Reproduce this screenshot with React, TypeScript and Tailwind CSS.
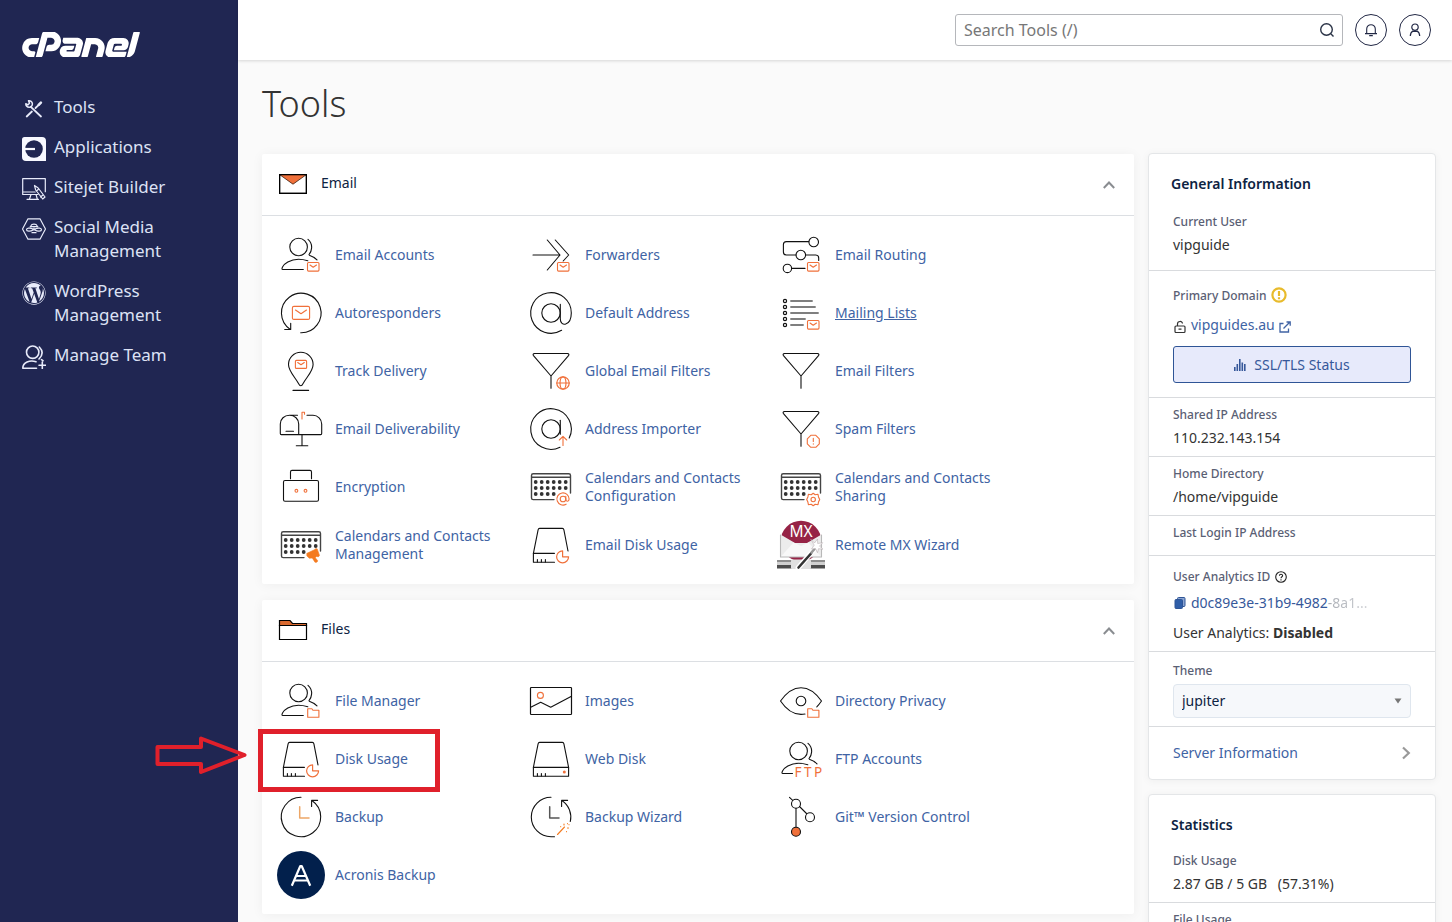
import React from "react";
import { SiCpanel } from "react-icons/si";
import { FaWordpress } from "react-icons/fa";

const ORANGE = "#f0703a";

function Art({ children }: { children: React.ReactNode }) {
  return (
    <svg
      viewBox="0 0 48 48"
      className="size-12 shrink-0 overflow-visible"
      fill="none"
      stroke="#111"
      strokeWidth="1.1"
      strokeLinecap="round"
      strokeLinejoin="round"
      aria-hidden="true"
    >
      {children}
    </svg>
  );
}

/* Small corner badges shared by several icons */
const MailBadge = () => (
  <g stroke={ORANGE}>
    <rect x="30.5" y="31.5" width="11.5" height="8.6" rx="1" />
    <path d="M33 34l3.2 2.2L39.5 34" />
  </g>
);
const FolderBadge = () => (
  <path stroke={ORANGE} d="M30.7 40.2v-8.4h4.2l1 1.4h6v7z" />
);
const PieBadge = () => (
  <path stroke={ORANGE} strokeWidth="1.2" d="M35.6 29.8a6 6 0 1 0 6 6h-6z" />
);

const UserShape = ({ short }: { short?: boolean }) => (
  <>
    <circle cx="21.6" cy="16" r="8.8" />
    <path d="M31 8.3c2.8 2.4 3.9 5.4 3.6 8.8-.2 3-1.3 5-2.6 6.5M32.3 24.3c3 1 5.7 2.5 7.7 4.6" />
    <path d={short ? "M15.5 38.5H5.8c-2.2 0 .2-5 5-7.6 5.7-3 13.5-3.1 20-1.1" : "M26.3 38.5H5.8c-2.2 0 .2-5 5-7.6 5.7-3 13.5-3.1 20-1.1"} />
  </>
);
const AtShape = ({ cut }: { cut?: boolean }) => (
  <>
    <circle cx="24" cy="24" r="9.2" />
    {cut ? (
      <>
        <path d="M42.2 33A20.3 20.3 0 1 0 33 42.2" />
        <path d="M33.3 15.3v14" />
      </>
    ) : (
      <path d="M33.3 15.3V30c0 8 10.9 7.3 11-6A20.3 20.3 0 1 0 34.6 41.3" />
    )}
  </>
);
const Funnel = () => (
  <path d="M7.5 6.5h33c1.4 0 1.8 1.2 1 2.2L24 29 6.5 8.7c-.8-1-.4-2.2 1-2.2zM24 29v12.3" />
);
const DOTS = [19, 25, 31];
const CalendarShape = () => (
  <>
    <path stroke="#444" strokeWidth="1.4" d="M27 36.6H6.2c-1 0-1.7-.6-1.7-1.6V12.4c0-1 .7-1.7 1.7-1.7h35.6c1 0 1.7.7 1.7 1.7V30M4.5 14.3h39" />
    <g fill="#333" stroke="none">
      {DOTS.map((y) =>
        [8.7, 14.7, 20.7, 26.7, 32.7, 38.7]
          .filter((x) => y < 31 || x < 28)
          .map((x) => <circle key={`${x}-${y}`} cx={x} cy={y} r="1.9" />)
      )}
    </g>
  </>
);
const DiskShape = ({ cut }: { cut?: boolean }) => (
  <>
    <path d={cut ? "M27.5 41.3H6.4v-9l4.7-23.5c.2-.9.7-1.4 1.5-1.4h22.8c.8 0 1.3.5 1.5 1.4L41 30" : "M6.4 41.3v-9l4.7-23.5c.2-.9.7-1.4 1.5-1.4h22.8c.8 0 1.3.5 1.5 1.4l4.7 23.5v9z"} />
    <path d={cut ? "M6.4 32.4h21M10.4 38.5v2.5M14.4 38.5v2.5M18.4 38.5v2.5" : "M6.4 32.4h35.2M10.4 38.5v2.5M14.4 38.5v2.5M18.4 38.5v2.5"} />
  </>
);

const icons: Record<string, React.ReactNode> = {
  "Email Accounts": <Art><UserShape /><MailBadge /></Art>,
  Forwarders: (
    <Art>
      <path d="M6 24h27M20.3 9L33 24 20.3 39M28.3 9l13.4 15-5.5 6" />
      <MailBadge />
    </Art>
  ),
  "Email Routing": (
    <Art>
      <circle cx="36.7" cy="11" r="4.8" />
      <circle cx="23.8" cy="24" r="4.8" />
      <circle cx="10.4" cy="37.4" r="4.2" />
      <path d="M31.7 10.6H9.4a3 3 0 0 0-3 3V21a3 3 0 0 0 3 3H19M28.7 24h10a3 3 0 0 1 3 3v2.5M14.7 37.4H28" />
      <MailBadge />
    </Art>
  ),
  Autoresponders: (
    <Art>
      <path d="M23.7 43.8A19.8 19.8 0 1 0 13.3 40.5M7.7 40.5h6v-6.3" />
      <g stroke={ORANGE}>
        <rect x="15.4" y="17.4" width="17.2" height="13" rx="1.5" />
        <path d="M18.5 21l5.5 3.8 5.5-3.8" />
      </g>
    </Art>
  ),
  "Default Address": <Art><AtShape /></Art>,
  "Mailing Lists": (
    <Art>
      {[12, 18, 24, 30, 36].map((y) => <circle key={y} cx="8" cy={y} r="1.6" strokeWidth="1.2" />)}
      <path stroke="#555" strokeWidth="1.5" strokeLinecap="butt" d="M13.3 12h22.4M13.3 18h25.4M13.3 24h28.4M13.3 30h15.4M13.3 36h13.4" />
      <MailBadge />
    </Art>
  ),
  "Track Delivery": (
    <Art>
      <path d="M23.8 38.7c-1 0-1.7-1-2.3-2.2C17.5 29.5 11.5 24 11.5 17.5a12.3 12.3 0 0 1 24.6 0c0 6.5-6 12-10 19-.6 1.2-1.3 2.2-2.3 2.2zM16 43.4h15.6" />
      <g stroke={ORANGE}>
        <rect x="18.4" y="13.4" width="11.2" height="8" rx="1" />
        <path d="M20.7 15.5l3.3 2.3 3.3-2.3" />
      </g>
    </Art>
  ),
  "Global Email Filters": (
    <Art>
      <Funnel />
      <g stroke={ORANGE} strokeWidth="1.2">
        <circle cx="36" cy="36" r="6.2" />
        <ellipse cx="36" cy="36" rx="3" ry="6.2" />
        <path d="M29.8 36h12.4" />
      </g>
    </Art>
  ),
  "Email Filters": <Art><Funnel /></Art>,
  "Email Deliverability": (
    <Art>
      <path d="M21.7 29.6H4.3c-.7 0-1-.4-1-1V19c0-5 4-8.7 9.2-8.7s9.2 3.7 9.2 8.7v10.6h22c.7 0 1-.4 1-1V19c0-5-4-8.7-8.7-8.7h-6M12.5 10.3h8M9 26.3h7.5M25 29.6v11.2M19.3 40.8h11.5" />
      <path stroke={ORANGE} d="M25 14V7.3h2.5v2" />
    </Art>
  ),
  "Address Importer": (
    <Art>
      <AtShape cut />
      <path stroke={ORANGE} d="M36 40.5v-9M32.3 35l3.7-3.6 3.7 3.6" />
    </Art>
  ),
  "Spam Filters": (
    <Art>
      <Funnel />
      <path stroke={ORANGE} d="M33.8 30.3h5l3.5 3.5v5l-3.5 3.5h-5l-3.5-3.5v-5zM36.3 33.3v3.2M36.3 38.7v.4" />
    </Art>
  ),
  Encryption: (
    <Art>
      <rect x="6.5" y="17.5" width="35" height="20.8" rx="1.5" />
      <path d="M13.5 15.7V8.9c0-1 .5-1.5 1.5-1.5h18c1 0 1.5.5 1.5 1.5v6.8" />
      <circle cx="19.4" cy="27.8" r="1.4" stroke={ORANGE} />
      <circle cx="28.5" cy="27.8" r="1.4" stroke={ORANGE} />
    </Art>
  ),
  "Calendars and Contacts Configuration": (
    <Art>
      <CalendarShape />
      <g stroke={ORANGE}>
        <circle cx="36" cy="36" r="2.8" />
        <path d="M38.8 33.2V36c0 3.2 3.3 2.8 3.3 0a6.1 6.1 0 1 0-3 5.2" />
      </g>
    </Art>
  ),
  "Calendars and Contacts Sharing": (
    <Art>
      <CalendarShape />
      <g stroke={ORANGE}>
        <circle cx="36.2" cy="36.5" r="2.2" />
        <path d="M36.2 30.2l2 1.5 2.8-.4.5 2.6 1.2 2.6-1.2 2.6-.5 2.6-2.8-.4-2 1.5-2-1.5-2.8.4-.5-2.6-1.2-2.6 1.2-2.6.5-2.6 2.8.4z" />
      </g>
    </Art>
  ),
  "Calendars and Contacts Management": (
    <Art>
      <CalendarShape />
      <path fill="#f47b20" stroke="#f47b20" strokeWidth=".6" d="M30 32.3l8-3.8.7-.9 1.5.3 2.3 6.500-1 1.300-2.200-.2-1 1.200 2.500 3.200-1 1.300-1.800.1-2.700-4.300-3 .2-2.300-2.200z" />
    </Art>
  ),
  "Email Disk Usage": <Art><DiskShape cut /><PieBadge /></Art>,
  "Remote MX Wizard": (
    <Art>
      <g stroke="none">
        <circle cx="24" cy="20" r="20.3" fill="#962346" />
        <path d="M3.5 13.5L18 22h12l14.5-8.5V36h-41z" fill="#ececec" />
        <path d="M3.5 36l13-14.500L24 25l7.500-3.500L44.500 36z" fill="#f8f8f8" />
        <rect y="39" width="48" height="2" fill="#8d8d8d" />
        <rect y="41" width="48" height="3" fill="#d0d0d0" />
        <rect y="44" width="48" height="3.5" fill="#4d4d4d" />
        <rect x="14" y="38.5" width="20" height="9.5" rx="1" fill="#e0e0e0" />
      </g>
      <path d="M3.5 14v22h41V14" stroke="#b8b8b8" />
      <text x="24" y="16" textAnchor="middle" fontSize="15.5" fill="#fff" stroke="none" fontFamily="Noto Sans, sans-serif">MX</text>
      <path d="M21 47l16.5-19" stroke="#fff" strokeWidth="5" />
      <path d="M21.5 46.5l12.5-14" stroke="#333" strokeWidth="2.6" />
      <path d="M34.5 31.5l3-3.5" stroke="#9a9a9a" strokeWidth="2.6" />
      <path fill="#fff" stroke="#b9aeb1" strokeWidth=".6" d="M34 18.5l3.5 3.5 3-4 .2 4.5 5-.8-3.200 3.500 3.500 3-4.500-.5-1 4-2-4.200-4 .5 2.500-3.500z" />
    </Art>
  ),
  "File Manager": <Art><UserShape /><FolderBadge /></Art>,
  Images: (
    <Art>
      <rect x="3.5" y="10.5" width="41" height="27" rx=".8" strokeWidth="1.2" />
      <path d="M3.7 30.2l10-5 10 5 20.8-11" />
      <circle cx="13.4" cy="18.4" r="3" stroke={ORANGE} />
    </Art>
  ),
  "Directory Privacy": (
    <Art>
      <path d="M28 37c-9.5 1.8-18-3.3-24.5-13 6-8.5 12.5-13.3 20.5-13.3S38.5 15.5 44.5 24c-1.5 2.2-3 4.2-4.7 5.8" />
      <circle cx="24" cy="24" r="4.8" />
      <FolderBadge />
    </Art>
  ),
  "Disk Usage": <Art><DiskShape cut /><PieBadge /></Art>,
  "Web Disk": (
    <Art>
      <DiskShape />
      <circle cx="37.3" cy="36.9" r="1.5" fill={ORANGE} stroke="none" />
    </Art>
  ),
  "FTP Accounts": (
    <Art>
      <UserShape short />
      <text x="17.5" y="41.7" fontSize="13.5" fill={ORANGE} stroke="none" fontFamily="Noto Sans, sans-serif">
        <tspan>F</tspan>
        <tspan x="27">T</tspan>
        <tspan x="37">P</tspan>
      </text>
    </Art>
  ),
  Backup: (
    <Art>
      <path d="M24 4.3A19.7 19.7 0 1 0 35.2 7.8M34.6 13.5V7.4h6" />
      <path stroke="#eda667" strokeWidth="1.5" d="M22.7 13.7V25H32" />
    </Art>
  ),
  "Backup Wizard": (
    <Art>
      <path d="M43.3 28.5A19.7 19.7 0 0 0 35.2 7.8M24 4.3a19.7 19.7 0 0 0 0 39.4h3.5M34.6 13.5V7.4h6" />
      <path stroke="#555" strokeWidth="1.5" d="M22.7 13.7V25H32" />
      <path stroke="#f47b20" d="M30.5 41.5l7-7.5M37 32v-1M33.7 33.5v.2M40.5 30.5v.2M40.5 35h1M42 31.5v.2M39.5 38.5v.2" />
    </Art>
  ),
  "Git™ Version Control": (
    <Art>
      <path d="M12.5 4.3l3.2 3M22.5 13.5l7 7" />
      <path stroke="#444" strokeWidth="1.4" d="M19 15.5V34" />
      <circle cx="19" cy="10.8" r="4.5" />
      <circle cx="33" cy="24.3" r="4.5" />
      <circle cx="19" cy="38.7" r="4.5" fill={ORANGE} />
    </Art>
  ),
  "Acronis Backup": (
    <Art>
      <circle cx="24" cy="24" r="24" fill="#02204c" stroke="none" />
      <path stroke="#fff" strokeWidth="2.2" strokeLinecap="butt" d="M14.8 34.7L23.3 15h1.4l8.5 19.7" />
      <path stroke="#fff" strokeWidth="1.8" strokeLinecap="butt" d="M19.5 25h9M17.5 29.5h13" />
    </Art>
  ),
};

function Callout() {
  return (
    <>
      <span className="pointer-events-none absolute -top-px -bottom-1 -left-[19px] w-[182px] border-[5px] border-[#e0202b]" />
      <svg viewBox="0 0 92 40" className="pointer-events-none absolute top-1.5 -left-[122px] z-10 h-10 w-[92px]" fill="none" stroke="#e0202b" strokeWidth="4" strokeLinejoin="round" aria-hidden="true">
        <path d="M2.5 11H46V2.500l43.500 16.500L46 36v-8H2.500z" />
      </svg>
    </>
  );
}

type Tool = { name: string; underlined?: boolean; marked?: boolean };

function Panel({ title, icon, tools }: { title: string; icon: React.ReactNode; tools: Tool[] }) {
  return (
    <section className="rounded-xs bg-white shadow-[0_1px_12px_rgba(0,0,0,0.05)]">
      <header className="flex h-[62px] items-center border-b border-[#dcdfe3] px-4">
        <div className="flex flex-1 items-center gap-[13px] pb-[3px]">
          <span className="mt-0.5">{icon}</span>
          <h2 className="text-sm text-[#0d2342]">{title}</h2>
        </div>
        <button type="button" aria-label={`Collapse ${title}`} className="flex size-[18px] items-center justify-center">
          <svg viewBox="0 0 12 8" className="h-2 w-3" fill="none" stroke="#8a8d91" strokeWidth="2" aria-hidden="true">
            <path d="M.8 7L6 1.500 11.200 7" />
          </svg>
        </button>
      </header>
      <ul className="grid grid-cols-[repeat(auto-fill,250px)] py-2.5 pl-[15px]">
        {tools.map((t) => (
          <li key={t.name} className="relative h-[58px]">
            <a href="#" className="flex h-full items-center gap-2.5 pr-6 text-sm leading-[18px] text-[#4063a4]">
              {icons[t.name]}
              <span className={t.underlined ? "underline" : ""}>{t.name}</span>
            </a>
            {t.marked && <Callout />}
          </li>
        ))}
      </ul>
    </section>
  );
}

const emailTools: Tool[] = [
  { name: "Email Accounts" },
  { name: "Forwarders" },
  { name: "Email Routing" },
  { name: "Autoresponders" },
  { name: "Default Address" },
  { name: "Mailing Lists", underlined: true },
  { name: "Track Delivery" },
  { name: "Global Email Filters" },
  { name: "Email Filters" },
  { name: "Email Deliverability" },
  { name: "Address Importer" },
  { name: "Spam Filters" },
  { name: "Encryption" },
  { name: "Calendars and Contacts Configuration" },
  { name: "Calendars and Contacts Sharing" },
  { name: "Calendars and Contacts Management" },
  { name: "Email Disk Usage" },
  { name: "Remote MX Wizard" },
];

const fileTools: Tool[] = [
  { name: "File Manager" },
  { name: "Images" },
  { name: "Directory Privacy" },
  { name: "Disk Usage", marked: true },
  { name: "Web Disk" },
  { name: "FTP Accounts" },
  { name: "Backup" },
  { name: "Backup Wizard" },
  { name: "Git™ Version Control" },
  { name: "Acronis Backup" },
];

function NavArt({ children }: { children: React.ReactNode }) {
  return (
    <svg viewBox="0 0 24 24" className="size-6" fill="none" stroke="#e8ebfa" strokeWidth="1.2" strokeLinecap="round" strokeLinejoin="round" aria-hidden="true">
      {children}
    </svg>
  );
}

const navItems: { label: string; icon: React.ReactNode }[] = [
  {
    label: "Tools",
    icon: (
      <NavArt>
        <path strokeWidth="1.8" d="M8.8 9.8l10.2 9.7M4.7 19.5l5.2-5M13.5 11l3.3-3.2" />
        <path strokeWidth="2.6" d="M16.7 7.8l2.2-2.2" />
        <path strokeWidth="1.5" d="M6.5 3.7a3.3 3.3 0 1 1-2.7 3l2 1.2 1.7-1.6z" />
      </NavArt>
    ),
  },
  {
    label: "Applications",
    icon: (
      <NavArt>
        <path fill="#f7f8ff" stroke="none" d="M2.5 0H20a4 4 0 0 1 4 4v20H4a4 4 0 0 1-4-4V2.5A2.5 2.5 0 0 1 2.5 0z" />
        <circle cx="12" cy="12" r="8.8" fill="#202652" stroke="none" />
        <path stroke="#f7f8ff" strokeWidth="2.2" strokeLinecap="butt" d="M2 12h11" />
      </NavArt>
    ),
  },
  {
    label: "Sitejet Builder",
    icon: (
      <NavArt>
        <path d="M16 17.5H.7V1.7h22.6v13M.7 15h12.5M9 17.5L7.5 22M14 17.5l1.3 4.5M5 22.3h11.5" />
        <path d="M12.5 8.5l1.2 4.5 7 9 2.3-2-6.8-9zM14.5 14l2.2-2M18.5 20l2.5-2" />
      </NavArt>
    ),
  },
  {
    label: "Social Media Management",
    icon: (
      <NavArt>
        <path d="M6 1.8h12L23.5 12 18 22.2H6L.5 12z" />
        <path d="M9 8.7c.6-2.2 5.4-2.2 6 0M8.2 9.7h7.6M11 12c-3-1.5-6.5-1-6.5.7s4 2 6.5.3M13 12c3-1.5 6.5-1 6.5.7s-4 2-6.5.3M10 15.7h4M12 11v2" />
      </NavArt>
    ),
  },
  { label: "WordPress Management", icon: <FaWordpress className="size-6 text-[#e8ebfa]" aria-hidden="true" /> },
  {
    label: "Manage Team",
    icon: (
      <NavArt>
        <g strokeWidth="1.6">
          <circle cx="10.7" cy="7.2" r="6.2" />
          <path d="M17.3 2c3.7 3.7 3.6 8-.3 12M19.5 14.7l1.500 1M14.500 23.200H.8c0-6 7-8.300 13.200-6.500M20.300 17v6.500M17 20.300h6.500" />
        </g>
      </NavArt>
    ),
  },
];

function Row({ label, children, className = "py-2" }: { label: React.ReactNode; children?: React.ReactNode; className?: string }) {
  return (
    <div className={`px-6 ${className}`}>
      <div className="flex items-center gap-1 text-xs leading-[18px] font-medium text-[#5a6074]">{label}</div>
      {children}
    </div>
  );
}

const cardClass = "rounded-sm border border-[#e4e6e8] bg-white shadow-[0_1px_8px_rgba(0,0,0,0.05)]";
const valueClass = "mt-1 text-sm leading-5 text-[#333]";

export default function App() {
  return (
    <div className="h-screen overflow-x-hidden overflow-y-auto bg-[#fafafa] font-['Noto_Sans',sans-serif] [scrollbar-width:none]">
      <div className="flex min-h-full">
        <nav className="w-[238px] shrink-0 bg-[#202652] px-[22px] pt-8" aria-label="Main">
          <a href="#" aria-label="cPanel" className="block">
            <SiCpanel viewBox="0 9.450 24 5.100" className="h-[25px] w-[118px] text-white" />
          </a>
          <ul className="mt-[38px] flex flex-col gap-4">
            {navItems.map((n) => (
              <li key={n.label}>
                <a href="#" className="flex items-start gap-2 text-[17px] leading-6 text-[#dde2f5]">
                  <span className="mt-0.5 h-[22px] shrink-0">{n.icon}</span>
                  <span>{n.label}</span>
                </a>
              </li>
            ))}
          </ul>
        </nav>

        <div className="min-w-0 flex-1">
          <header className="flex h-[60px] items-center justify-end gap-3 bg-white pr-[21px] shadow-[0_1px_3px_rgba(0,0,0,0.15)]">
            <form role="search" className="flex h-8 w-[388px] items-center rounded-[3px] border border-[#b5b7bb] pr-[7px] pl-2" onSubmit={(e) => e.preventDefault()}>
              <input type="text" aria-label="Search Tools" placeholder="Search Tools (/)" className="min-w-0 flex-1 text-base leading-6 outline-none placeholder:text-[#777]" />
              <button type="submit" aria-label="Search">
                <svg viewBox="0 0 16 16" className="size-4" fill="none" stroke="#2b3447" strokeWidth="1.4" aria-hidden="true">
                  <circle cx="7.5" cy="7.5" r="5.8" />
                  <path d="M11.800 11.800l2.700 2.700" />
                </svg>
              </button>
            </form>
            <button type="button" aria-label="Notifications" className="flex size-8 items-center justify-center rounded-full border border-[#222845]">
              <svg viewBox="0 0 14 14" className="size-3.5" fill="none" stroke="#222845" strokeWidth="1.1" aria-hidden="true">
                <path d="M1 10.600h12M2.700 10.600V6a4.300 4.300 0 0 1 8.600 0v4.600M5.200 12.600h3.600" />
              </svg>
            </button>
            <button type="button" aria-label="Account" className="flex size-8 items-center justify-center rounded-full border border-[#222845]">
              <svg viewBox="0 0 14 14" className="size-3.5" fill="none" stroke="#222845" strokeWidth="1.2" aria-hidden="true">
                <circle cx="7" cy="4.2" r="3.2" />
                <path d="M2.300 13c0-2.800 1.300-4.300 3-5.200M11.700 13c0-2.800-1.300-4.300-3-5.200M5 8.500h4" />
              </svg>
            </button>
          </header>

          <main className="pr-4 pb-4 pl-6">
            <h1 className="pt-5 text-4xl leading-[48px] font-light text-[#333]">Tools</h1>
            <div className="mt-[25px] flex items-start gap-3.5">
              <div className="flex min-w-0 flex-1 flex-col gap-4 pt-px">
                <Panel
                  title="Email"
                  tools={emailTools}
                  icon={
                    <svg viewBox="0 0 30 22" className="h-[22px] w-[30px]" fill="none" stroke="#000" strokeWidth="1.2" aria-hidden="true">
                      <path d="M1.600 1.600h26.800v18.800H1.600z" fill="#fff" />
                      <path d="M1.600 1.600h26.800L15 11.200z" fill={ORANGE} stroke="#3a1a0a" strokeWidth=".8" />
                      <path d="M1.600 1.600h26.800v18.800H1.600z" />
                    </svg>
                  }
                />
                <Panel
                  title="Files"
                  tools={fileTools}
                  icon={
                    <svg viewBox="0 0 30 22" className="h-[22px] w-[30px]" stroke="#000" strokeWidth="1.2" aria-hidden="true">
                      <path d="M1.500 6.500v-5H12l2.500 3h14v2z" fill="#d9692f" />
                      <path d="M1.500 6.500h27v14h-27z" fill="#fff" />
                    </svg>
                  }
                />
              </div>

              <aside className="flex w-[288px] shrink-0 flex-col gap-3.5">
                <section className={cardClass}>
                  <h3 className="px-[22px] pt-5 pb-4 text-sm leading-5 font-semibold text-[#0d2342]">General Information</h3>
                  <div className="divide-y divide-[#d9dbde]">
                    <Row label="Current User" className="pt-[3px] pb-[15px]">
                      <div className={valueClass}>vipguide</div>
                    </Row>
                    <Row
                      className="pt-4 pb-3.5"
                      label={
                        <>
                          Primary Domain
                          <svg viewBox="0 0 16 16" className="mb-0.5 size-4" fill="none" stroke="#e8bb2c" strokeWidth="2.2" aria-hidden="true">
                            <circle cx="8" cy="8" r="6.6" />
                            <path d="M8 4v5M8 10.300v1.900" />
                          </svg>
                        </>
                      }
                    >
                      <div className="mt-[9px] flex items-center gap-1 text-sm leading-[22px]">
                        <svg viewBox="0 0 14 14" className="mt-1 size-3.5" fill="none" stroke="#333" strokeWidth="1.2" aria-hidden="true">
                          <rect x="2" y="6" width="10" height="6.5" rx="1" />
                          <path d="M4.500 6V3.800C4.500 1 9.500.5 9.500 3.500M5.500 9.200h3" />
                        </svg>
                        <a href="#" className="flex items-center gap-1 text-[#4063a4]">
                          vipguides.au
                          <svg viewBox="0 0 12 12" className="mt-1 size-3" fill="none" stroke="currentColor" strokeWidth="1.3" aria-hidden="true">
                            <path d="M4.500 2.500H1v8.500h8.500V7.500M4.500 7.500L10.700 1.300M7.500 1h3.700v3.700" />
                          </svg>
                        </a>
                      </div>
                      <button type="button" className="mt-2.5 flex h-[37px] w-full items-center justify-center gap-2 rounded-[3px] border border-[#2f5596] bg-[#e7eafb] text-sm text-[#36589a]">
                        <svg viewBox="0 0 12 12" className="size-3" fill="currentColor" aria-hidden="true">
                          <path d="M0 8h1.600v4H0zM2.500 5h1.600v7H2.500zM5 0h1.600v12H5zM7.500 3.500h1.600V12H7.500zM10 5h1.600v7H10z" />
                        </svg>
                        SSL/TLS Status
                      </button>
                    </Row>
                    <Row label="Shared IP Address">
                      <div className={valueClass}>110.232.143.154</div>
                    </Row>
                    <Row label="Home Directory">
                      <div className={valueClass}>/home/vipguide</div>
                    </Row>
                    <Row label="Last Login IP Address" className="pt-2 pb-[13px]" />
                    <Row
                      className="pt-3 pb-[7px]"
                      label={
                        <>
                          User Analytics ID
                          <svg viewBox="0 0 12 12" className="ml-px size-3" fill="none" stroke="#222" strokeWidth="1.1" aria-hidden="true">
                            <circle cx="6" cy="6" r="5.3" />
                            <path d="M4.400 4.800c0-2 3.200-2 3.200-.1C7.600 5.800 6 5.700 6 7.200M6 8.300v1.200" />
                          </svg>
                        </>
                      }
                    >
                      <div className="mt-1.5 flex items-center gap-1 text-sm leading-[22px] text-[#36589a]">
                        <svg viewBox="0 0 14 14" className="size-3.5" aria-hidden="true">
                          <rect x="4.5" y="1.5" width="7.5" height="9" rx="1" fill="#8ca6d3" stroke="#2f5596" />
                          <rect x="2" y="3.5" width="7.5" height="9" rx="1" fill="#2f5ea8" stroke="#2f5596" />
                        </svg>
                        <span>
                          d0c89e3e-31b9-4982
                          <span className="bg-linear-to-r from-[#a9adb4] to-[#d0d2d6] bg-clip-text text-transparent">-8a1...</span>
                        </span>
                      </div>
                      <div className="mt-2 text-sm leading-[22px] text-[#333]">
                        User Analytics: <strong className="font-bold">Disabled</strong>
                      </div>
                    </Row>
                    <Row label={<label htmlFor="theme">Theme</label>} className="pt-2.5 pb-2">
                      <div className="relative mt-1">
                        <select id="theme" className="block h-[34px] w-full appearance-none rounded-sm border border-[#dfe6ee] bg-[#f6f8fb] px-2 text-sm text-[#0d2342]" defaultValue="jupiter">
                          <option value="jupiter">jupiter</option>
                        </select>
                        <svg viewBox="0 0 8 6" className="pointer-events-none absolute top-3.5 right-[9px] h-1.5 w-2" fill="#777" aria-hidden="true">
                          <path d="M.5.5h7L4 5.500z" />
                        </svg>
                      </div>
                    </Row>
                    <a href="#" className="flex h-[52px] items-center justify-between px-6 text-sm text-[#4063a4]">
                      Server Information
                      <svg viewBox="0 0 10 14" className="h-3.5 w-2.5" fill="none" stroke="#999" strokeWidth="2.2" aria-hidden="true">
                        <path d="M2 1.500L7.800 7 2 12.500" />
                      </svg>
                    </a>
                  </div>
                </section>

                <section className={cardClass}>
                  <h3 className="px-[22px] pt-5 pb-4 text-sm leading-5 font-semibold text-[#0d2342]">Statistics</h3>
                  <div className="divide-y divide-[#d9dbde]">
                    <Row label="Disk Usage" className="pt-px pb-2">
                      <div className={valueClass}>
                        2.87 GB / 5 GB <span className="ml-[7px]">(57.31%)</span>
                      </div>
                    </Row>
                    <Row label="File Usage" />
                  </div>
                </section>
              </aside>
            </div>
          </main>
        </div>
      </div>
    </div>
  );
}
